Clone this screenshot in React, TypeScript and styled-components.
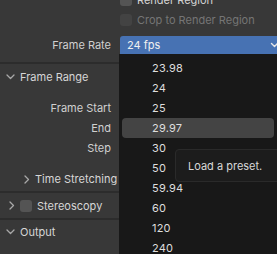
import React from "react";
import styled, { createGlobalStyle } from "styled-components";

const GlobalStyle = createGlobalStyle`
  html, body { margin: 0; padding: 0; background: #2c2c2c; }
  body { font-family: Inter, "Noto Sans", sans-serif; font-size: 11px; }
`;

const Page = styled.div`
  position: relative;
  width: 277px;
  height: 254px;
  overflow: hidden;
  background: #2c2c2c;
  display: flex;
  flex-direction: column;
  gap: 2px;
`;

const Panel = styled.div<{ $pad?: string; $shift?: number }>`
  background: #383838;
  display: flex;
  flex-direction: column;
  flex: none;
  padding: ${(p) => p.$pad || "0"};
  margin-top: ${(p) => p.$shift || 0}px;
  & > * { flex: none; }
`;

const PropRow = styled.div<{ $h?: number; $mt?: number }>`
  display: grid;
  grid-template-columns: 111px 1fr;
  column-gap: 9px;
  height: ${(p) => p.$h || 20}px;
  margin-top: ${(p) => p.$mt || 0}px;
  align-items: center;
`;

const Label = styled.span`
  text-align: right;
  color: #d0d0d0;
  white-space: nowrap;
`;

const CheckField = styled.div<{ $disabled?: boolean }>`
  display: flex;
  align-items: center;
  gap: 5px;
  color: ${(p) => (p.$disabled ? "#757575" : "#d4d4d4")};
  white-space: nowrap;
`;

const Box = styled.span<{ $disabled?: boolean }>`
  width: 12px;
  height: 12px;
  border-radius: 3px;
  background: ${(p) => (p.$disabled ? "#434343" : "#545454")};
  flex: none;
`;

const Dropdown = styled.div`
  height: 18px;
  background: #4772b3;
  border-radius: 3px 0 0 0;
  display: flex;
  align-items: center;
  justify-content: space-between;
  padding: 0 2px 0 7px;
  color: #f0f0f0;
  margin-right: -4px;
`;

const Header = styled.div<{ $indent: number; $h: number; $mt?: number }>`
  height: ${(p) => p.$h}px;
  margin-top: ${(p) => p.$mt || 0}px;
  display: flex;
  align-items: center;
  gap: 5px;
  padding-left: ${(p) => p.$indent}px;
  color: #d6d6d6;
  white-space: nowrap;
`;

const Menu = styled.div`
  position: absolute;
  left: 119px;
  top: 54px;
  width: 158px;
  height: 210px;
  background: #181818;
  padding: 4px 3px 0 3px;
  box-sizing: border-box;
  display: flex;
  flex-direction: column;
`;

const Item = styled.div<{ $active?: boolean }>`
  height: 20px;
  flex: none;
  display: flex;
  align-items: center;
  padding-left: 30px;
  color: #dedede;
  border-radius: 4px;
  background: ${(p) => (p.$active ? "#444444" : "transparent")};
  letter-spacing: 0.2px;
`;

const Tooltip = styled.div`
  position: absolute;
  left: 175px;
  top: 149px;
  width: 106px;
  height: 33px;
  box-sizing: border-box;
  background: #1c1c1c;
  border: 1px solid #2a2a2a;
  border-radius: 4px;
  display: flex;
  align-items: center;
  padding-left: 12px;
  color: #d8d8d8;
  white-space: nowrap;
`;

const Chevron = ({ dir }: { dir: "down" | "right" }) =>
  dir === "down" ? (
    <svg width="9" height="6" viewBox="0 0 9 6" style={{ flex: "none" }}>
      <polyline points="1,1 4.5,4.5 8,1" fill="none" stroke="#a8a8a8" strokeWidth="1.3" strokeLinecap="round" strokeLinejoin="round" />
    </svg>
  ) : (
    <svg width="6" height="9" viewBox="0 0 6 9" style={{ flex: "none" }}>
      <polyline points="1,1 4.5,4.5 1,8" fill="none" stroke="#a8a8a8" strokeWidth="1.3" strokeLinecap="round" strokeLinejoin="round" />
    </svg>
  );

const DropChevron = () => (
  <svg width="9" height="6" viewBox="0 0 9 6">
    <polyline points="1.5,1.5 4.5,4.5 7.5,1.5" fill="none" stroke="#e6e6e6" strokeWidth="1.4" strokeLinecap="round" strokeLinejoin="round" />
  </svg>
);

const rates = ["23.98", "24", "25", "29.97", "30", "50", "59.94", "60", "120", "240"];

export default function App() {
  return (
    <>
      <GlobalStyle />
      <Page>
        <Panel $pad="0 0 8px 0" $shift={-10}>
          <PropRow>
            <span />
            <CheckField>
              <Box />
              Render Region
            </CheckField>
          </PropRow>
          <PropRow>
            <span />
            <CheckField $disabled>
              <Box $disabled />
              Crop to Render Region
            </CheckField>
          </PropRow>
          <PropRow $h={18} $mt={6}>
            <Label>Frame Rate</Label>
            <Dropdown>
              <span>24 fps</span>
              <DropChevron />
            </Dropdown>
          </PropRow>
        </Panel>
        <Panel>
          <Header $indent={6} $h={26}>
            <Chevron dir="down" />
            Frame Range
          </Header>
          <PropRow $mt={8}>
            <Label>Frame Start</Label>
            <span />
          </PropRow>
          <PropRow>
            <Label>End</Label>
            <span />
          </PropRow>
          <PropRow>
            <Label>Step</Label>
            <span />
          </PropRow>
          <Header $indent={24} $h={24} $mt={9}>
            <Chevron dir="right" />
            Time Stretching
          </Header>
        </Panel>
        <Panel>
          <Header $indent={9} $h={25}>
            <Chevron dir="right" />
            <Box />
            Stereoscopy
          </Header>
        </Panel>
        <Panel style={{ flex: 1 }}>
          <Header $indent={6} $h={24}>
            <Chevron dir="down" />
            Output
          </Header>
        </Panel>
        <Menu>
          {rates.map((r) => (
            <Item key={r} $active={r === "29.97"}>
              {r}
            </Item>
          ))}
        </Menu>
        <Tooltip>Load a preset.</Tooltip>
      </Page>
    </>
  );
}
